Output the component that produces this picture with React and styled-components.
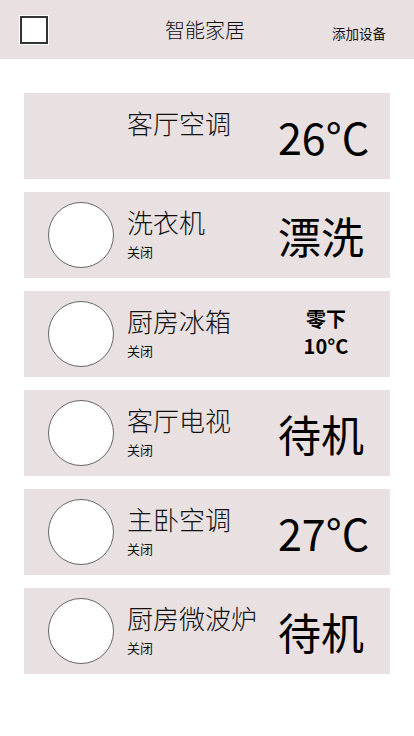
import React from 'react';
import styled, { createGlobalStyle } from 'styled-components';

const GlobalStyle = createGlobalStyle`
  body {
    margin: 0;
    background: #ffffff;
    font-family: "Noto Sans CJK SC", "Noto Sans", sans-serif;
    color: #111;
  }
`;

const Page = styled.div`
  width: 414px;
  min-height: 736px;
  background: #ffffff;
`;

const Header = styled.header`
  height: 59px;
  background: #e8e0e1;
  display: flex;
  align-items: center;
  padding: 0 28px 0 20px;
  box-sizing: border-box;
`;

const MenuBox = styled.div`
  width: 28px;
  height: 28px;
  box-sizing: border-box;
  border: 2px solid #333;
  background: #fff;
  outline: 1px solid #fff;
`;

const Title = styled.h1`
  flex: 1;
  margin: 0;
  text-align: center;
  font-size: 20px;
  font-weight: 300;
  padding-left: 30px;
  color: #111;
`;

const AddButton = styled.div`
  font-size: 13.5px;
  margin-top: 6px;
  color: #111;
`;

const List = styled.main`
  display: flex;
  flex-direction: column;
  gap: 13px;
  padding: 34px 24px 0 24px;
`;

const Card = styled.div`
  height: 86px;
  background: #e8e0e1;
  display: flex;
  align-items: center;
  padding: 0 16px 0 24px;
`;

const Avatar = styled.div`
  width: 66px;
  height: 66px;
  box-sizing: border-box;
  border-radius: 50%;
  border: 1px solid #666;
  background: #fff;
  flex-shrink: 0;
  visibility: ${({ $hidden }) => ($hidden ? 'hidden' : 'visible')};
`;

const Info = styled.div`
  width: 151px;
  margin-left: 13px;
  display: flex;
  flex-direction: column;
  padding-bottom: 4px;
`;

const Name = styled.div`
  font-size: 26px;
  font-weight: 300;
  line-height: 34px;
  white-space: nowrap;
  color: #111;
`;

const Status = styled.div`
  font-size: 13px;
  line-height: 18px;
  height: 18px;
  margin-top: 4px;
  color: #111;
`;

const Value = styled.div`
  width: 96px;
  text-align: ${({ $center }) => ($center ? 'center' : 'left')};
  font-size: ${({ $small }) => ($small ? '20px' : '43px')};
  font-weight: ${({ $small }) => ($small ? 700 : 400)};
  line-height: ${({ $small }) => ($small ? '27px' : '50px')};
  color: #000;
  white-space: ${({ $small }) => ($small ? 'normal' : 'nowrap')};
  padding-bottom: ${({ $small }) => ($small ? '4px' : '0')};
`;

const devices = [
  { name: '客厅空调', status: '', value: '26°C', noIcon: true },
  { name: '洗衣机', status: '关闭', value: '漂洗' },
  { name: '厨房冰箱', status: '关闭', value: ['零下', '10°C'], small: true },
  { name: '客厅电视', status: '关闭', value: '待机' },
  { name: '主卧空调', status: '关闭', value: '27°C' },
  { name: '厨房微波炉', status: '关闭', value: '待机' },
];

export default function App() {
  return (
    <Page>
      <GlobalStyle />
      <Header>
        <MenuBox />
        <Title>智能家居</Title>
        <AddButton>添加设备</AddButton>
      </Header>
      <List>
        {devices.map((d, i) => (
          <Card key={i}>
            <Avatar $hidden={d.noIcon} />
            <Info>
              <Name>{d.name}</Name>
              <Status>{d.status}</Status>
            </Info>
            {d.small ? (
              <Value $small $center>
                {d.value[0]}
                <br />
                {d.value[1]}
              </Value>
            ) : (
              <Value>{d.value}</Value>
            )}
          </Card>
        ))}
      </List>
    </Page>
  );
}
